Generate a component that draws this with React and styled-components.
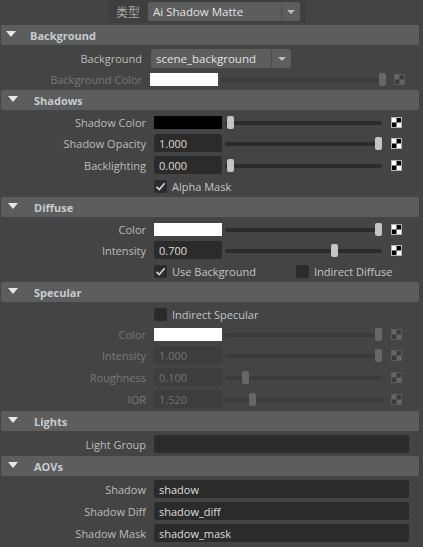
import React from 'react';
import styled, { createGlobalStyle } from 'styled-components';

const GlobalStyle = createGlobalStyle`
  html, body {
    margin: 0;
    padding: 0;
    background: #444444;
  }
  body {
    width: 423px;
    height: 547px;
    overflow: hidden;
    font-family: "Open Sans", "Noto Sans CJK SC", sans-serif;
    font-size: 11px;
    color: #bdbdbd;
  }
`;

const CheckerIcon = ({ dim }) => (
  <svg width="11" height="11" viewBox="0 0 11 11">
    <rect x="0.5" y="0.5" width="10" height="10" fill={dim ? '#3a3a3a' : '#000'} stroke={dim ? '#5c5c5c' : '#b5b5b5'} />
    <rect x="1" y="1" width="4.5" height="4.5" fill={dim ? '#666' : '#fff'} />
    <rect x="5.5" y="5.5" width="4.5" height="4.5" fill={dim ? '#666' : '#fff'} />
  </svg>
);

const CheckMark = () => (
  <svg width="13" height="13" viewBox="0 0 13 13">
    <path d="M2.5 6.8 L5.3 9.6 L10.6 3.2" fill="none" stroke="#d0d0d0" strokeWidth="1.7" />
  </svg>
);

const App = () => {
  return (
    <Panel>
      <GlobalStyle />
      <TopBar>
        <TypeLabel>类型</TypeLabel>
        <Dropdown $w={152}>
          <DropText>Ai Shadow Matte</DropText>
          <DropArrow $w={18} />
        </Dropdown>
      </TopBar>

      <Header $shift>
        <Triangle $shift />
        Background
      </Header>
      <Body>
        <Row $h={22}>
          <Label $shift>Background</Label>
          <Dropdown $w={140} style={{ marginLeft: 1 }}>
            <DropText>scene_background</DropText>
            <DropArrow $w={19} />
          </Dropdown>
        </Row>
        <Row $h={20}>
          <Label $shift $dim>Background Color</Label>
          <Swatch $color="#ffffff" />
          <SliderControl value={1} width={165} dim />
          <CheckerSlot $gap={8}><CheckerIcon dim /></CheckerSlot>
        </Row>
      </Body>

      <Header>
        <Triangle />
        Shadows
      </Header>
      <Body>
        <Row $h={20}>
          <Label>Shadow Color</Label>
          <Swatch $color="#000000" />
          <SliderControl value={0} />
          <CheckerSlot><CheckerIcon /></CheckerSlot>
        </Row>
        <Row $h={22}>
          <Label>Shadow Opacity</Label>
          <Field>1.000</Field>
          <SliderControl value={1} />
          <CheckerSlot><CheckerIcon /></CheckerSlot>
        </Row>
        <Row $h={22}>
          <Label>Backlighting</Label>
          <Field>0.000</Field>
          <SliderControl value={0} />
          <CheckerSlot><CheckerIcon /></CheckerSlot>
        </Row>
        <CheckRow>
          <CheckItem>
            <Box><CheckMark /></Box>
            Alpha Mask
          </CheckItem>
        </CheckRow>
      </Body>

      <Header>
        <Triangle />
        Diffuse
      </Header>
      <Body>
        <Row $h={20}>
          <Label>Color</Label>
          <Swatch $color="#ffffff" />
          <SliderControl value={1} />
          <CheckerSlot><CheckerIcon /></CheckerSlot>
        </Row>
        <Row $h={22}>
          <Label>Intensity</Label>
          <Field>0.700</Field>
          <SliderControl value={0.7} />
          <CheckerSlot><CheckerIcon /></CheckerSlot>
        </Row>
        <CheckRow>
          <CheckItem $w={142}>
            <Box><CheckMark /></Box>
            Use Background
          </CheckItem>
          <CheckItem>
            <Box />
            Indirect Diffuse
          </CheckItem>
        </CheckRow>
      </Body>

      <Header>
        <Triangle />
        Specular
      </Header>
      <Body>
        <CheckRow>
          <CheckItem>
            <Box />
            Indirect Specular
          </CheckItem>
        </CheckRow>
        <Row $h={20}>
          <Label $dim>Color</Label>
          <Swatch $color="#ffffff" />
          <SliderControl value={1} dim />
          <CheckerSlot><CheckerIcon dim /></CheckerSlot>
        </Row>
        <Row $h={22}>
          <Label $dim>Intensity</Label>
          <Field $dim>1.000</Field>
          <SliderControl value={1} dim />
          <CheckerSlot><CheckerIcon dim /></CheckerSlot>
        </Row>
        <Row $h={22}>
          <Label $dim>Roughness</Label>
          <Field $dim>0.100</Field>
          <SliderControl value={0.1} dim />
          <CheckerSlot><CheckerIcon dim /></CheckerSlot>
        </Row>
        <Row $h={22}>
          <Label $dim>IOR</Label>
          <Field $dim>1.520</Field>
          <SliderControl value={0.152} dim />
          <CheckerSlot><CheckerIcon dim /></CheckerSlot>
        </Row>
      </Body>

      <Header>
        <Triangle />
        Lights
      </Header>
      <Body>
        <Row $h={22}>
          <Label>Light Group</Label>
          <Field $w={255} />
        </Row>
      </Body>

      <Header>
        <Triangle />
        AOVs
      </Header>
      <Body>
        <Row $h={22}>
          <Label>Shadow</Label>
          <Field $w={255}>shadow</Field>
        </Row>
        <Row $h={22}>
          <Label>Shadow Diff</Label>
          <Field $w={255}>shadow_diff</Field>
        </Row>
        <Row $h={22}>
          <Label>Shadow Mask</Label>
          <Field $w={255}>shadow_mask</Field>
        </Row>
      </Body>
    </Panel>
  );
};

const SliderControl = ({ value, width = 157, dim }) => (
  <Slider $w={width} $dim={dim}>
    <Thumb $dim={dim} style={{ left: 2 + value * (width - 9) }} />
  </Slider>
);

// Styled Components
const Panel = styled.div`
  width: 423px;
  height: 547px;
  background: #444444;
`;

const TopBar = styled.div`
  display: flex;
  align-items: center;
  width: 198px;
  height: 23px;
  margin: 0 0 2px 108px;
  background: #3f3f3f;
`;

const TypeLabel = styled.div`
  width: 40px;
  box-sizing: border-box;
  padding-right: 8px;
  text-align: right;
  font-size: 12px;
  color: #a9a9a9;
`;

const Dropdown = styled.div`
  display: flex;
  width: ${({ $w }) => $w}px;
  height: 19px;
  background: #5d5d5d;
  border-radius: 2px;
`;

const DropText = styled.div`
  flex: 1;
  padding-left: 5px;
  line-height: 20px;
  font-size: 11.5px;
  color: #e2e2e2;
  white-space: nowrap;
`;

const DropArrow = styled.div`
  position: relative;
  width: ${({ $w }) => $w}px;
  border-left: 1px solid #4c4c4c;

  &::after {
    content: '';
    position: absolute;
    left: 50%;
    top: 8px;
    margin-left: -4px;
    border-left: 4px solid transparent;
    border-right: 4px solid transparent;
    border-top: 4px solid #bdbdbd;
  }
`;

const Header = styled.div`
  display: flex;
  align-items: center;
  height: 20px;
  margin: 0 4px 0 1px;
  padding-left: ${({ $shift }) => ($shift ? 5 : 7)}px;
  background: #5d5d5d;
  border-radius: 2px;
  font-weight: 700;
  font-size: 11px;
  color: #c9ccd0;
`;

const Triangle = styled.div`
  width: 0;
  height: 0;
  margin-right: ${({ $shift }) => ($shift ? 14 : 16)}px;
  border-left: 5px solid transparent;
  border-right: 5px solid transparent;
  border-top: 6px solid #e6e6e6;
  margin-top: -3px;
`;

const Body = styled.div`
  padding: 2px 0 1px;
`;

const Row = styled.div`
  display: flex;
  align-items: center;
  height: ${({ $h }) => $h}px;
`;

const Label = styled.div`
  width: ${({ $shift }) => ($shift ? 142 : 146)}px;
  margin-right: 8px;
  text-align: right;
  white-space: nowrap;
  color: ${({ $dim }) => ($dim ? '#787878' : '#bdbdbd')};
`;

const Field = styled.div`
  width: ${({ $w }) => $w || 68}px;
  height: 18px;
  box-sizing: border-box;
  padding-left: 5px;
  line-height: 19px;
  border-radius: 2px;
  background: ${({ $dim }) => ($dim ? '#3e3e3e' : '#2b2b2b')};
  color: ${({ $dim }) => ($dim ? '#717171' : '#dedede')};
`;

const Swatch = styled.div`
  width: 68px;
  height: 13px;
  background: ${({ $color }) => $color};
`;

const Slider = styled.div`
  position: relative;
  width: ${({ $w }) => $w}px;
  height: 13px;
  margin-left: 3px;

  &::before {
    content: '';
    position: absolute;
    left: 0;
    right: 0;
    top: 5px;
    height: 4px;
    border-radius: 2px;
    background: ${({ $dim }) => ($dim ? '#3b3b3b' : '#2b2b2b')};
  }
`;

const Thumb = styled.div`
  position: absolute;
  top: 0;
  width: 7px;
  height: 13px;
  border-radius: 2px;
  background: ${({ $dim }) => ($dim ? '#676767' : '#c4c4c4')};
`;

const CheckerSlot = styled.div`
  display: flex;
  margin-left: ${({ $gap }) => $gap || 9}px;
`;

const CheckRow = styled.div`
  display: flex;
  align-items: center;
  height: 20px;
  padding-left: 154px;
`;

const CheckItem = styled.div`
  display: flex;
  align-items: center;
  gap: 5px;
  width: ${({ $w }) => ($w ? `${$w}px` : 'auto')};
  color: #c2c6ca;
  white-space: nowrap;
`;

const Box = styled.div`
  display: flex;
  width: 13px;
  height: 13px;
  border-radius: 2px;
  background: #2b2b2b;
`;

export default App;
